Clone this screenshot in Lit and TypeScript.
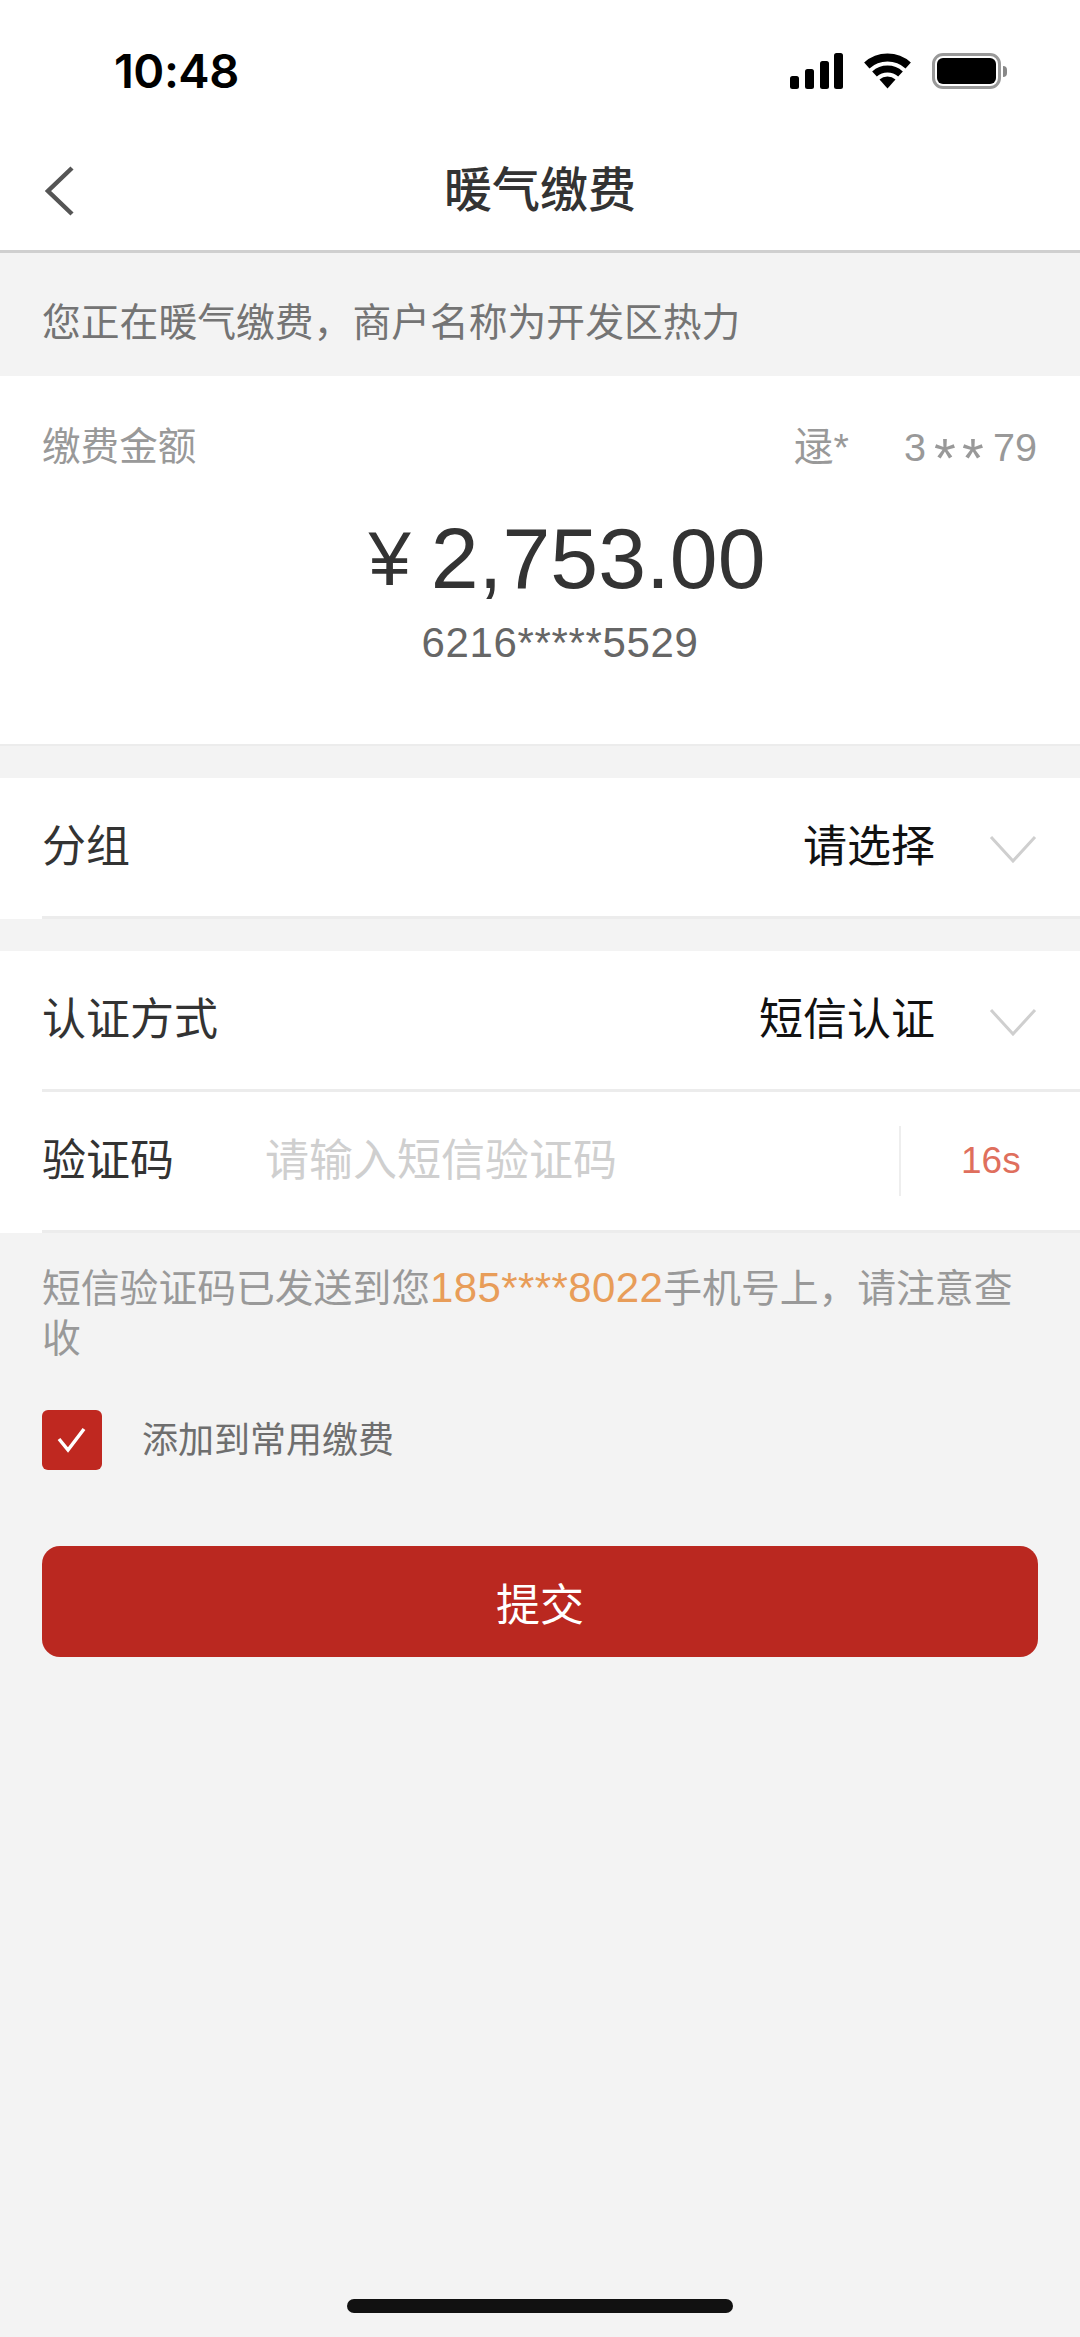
import { LitElement, css, html } from 'lit'
import { customElement } from 'lit/decorators.js'

const chevron = html`<svg class="chevron" width="48" height="28" viewBox="0 0 48 28"><polyline points="2,2 24,26 46,2" fill="none" stroke="#cfcfcf" stroke-width="3"></polyline></svg>`

@customElement('app-root')
export class AppRoot extends LitElement {
  static styles = css`
    :host {
      display: flex;
      flex-direction: column;
      width: 1080px;
      min-height: 2337px;
      background: #f3f3f3;
      font-family: "Liberation Sans", "Noto Sans CJK SC", sans-serif;
      color: #333;
    }
    .top { background: #fff; }
    .status {
      display: flex;
      justify-content: space-between;
      height: 130px;
      box-sizing: border-box;
      padding: 53px 73px 0 114px;
    }
    .time {
      font-family: Inter, sans-serif;
      font-size: 47px;
      font-weight: 600;
      line-height: 36px;
      color: #000;
      letter-spacing: -0.5px;
    }
    .icons { display: flex; align-items: flex-start; gap: 21px; }
    .battery { display: flex; align-items: center; gap: 2px; }
    .battery-body {
      width: 69px;
      height: 36px;
      box-sizing: border-box;
      border: 3px solid #999;
      border-radius: 11px;
      padding: 2px;
    }
    .battery-fill { height: 100%; background: #000; border-radius: 6px; }
    .battery-nub { width: 4px; height: 11px; background: #888; border-radius: 0 4px 4px 0; }

    .nav {
      display: grid;
      grid-template-columns: 1fr auto 1fr;
      align-items: center;
      height: 120px;
      padding-left: 45px;
      padding-right: 45px;
      border-bottom: 3px solid #cfcfcf;
    }
    .back { display: block; margin-top: 2px; }
    .title { font-size: 48px; font-weight: 500; line-height: 60px; color: #333; margin-top: 2px; }

    .notice {
      height: 123px;
      box-sizing: border-box;
      padding: 45px 42px 0;
      font-size: 38.8px;
      line-height: 50px;
      color: #747474;
    }

    .card {
      height: 370px;
      box-sizing: border-box;
      background: #fff;
      border-bottom: 2px solid #ececec;
      padding-top: 46px;
    }
    .card-head {
      display: flex;
      justify-content: space-between;
      padding: 0 42px;
      font-size: 38.6px;
      line-height: 50px;
      color: #999;
    }
    .payer { display: flex; align-items: center; padding-right: 1px; font-size: 39.6px; }
    .payer-name { margin-right: 55px; }
    .star {
      display: inline-block;
      width: 28px;
      height: 28px;
      font-size: 56px;
      line-height: 50px;
      text-align: center;
    }
    .star-first { margin-left: 5px; }
    .payer-end { margin-left: 6px; }
    .amount {
      display: flex;
      justify-content: center;
      align-items: center;
      gap: 20px;
      margin-top: 36px;
      padding-left: 54px;
      height: 100px;
      font-size: 86px;
      color: #333;
    }
    .yen { font-size: 76px; }
    .card-no {
      margin-top: 10px;
      padding-left: 40px;
      text-align: center;
      font-size: 42px;
      line-height: 50px;
      letter-spacing: 0.65px;
      color: #666;
    }

    .group { margin-top: 32px; }
    .row { background: #fff; padding-left: 42px; }
    .row-inner {
      display: flex;
      align-items: center;
      height: 138px;
      border-bottom: 3px solid #ececec;
      font-size: 44px;
      line-height: 60px;
      color: #333;
    }
    .row-label { flex: 1; }
    .row-value { color: #111; margin-right: 54px; }
    .chevron { margin-right: 43px; margin-top: 4px; }
    .code-label { width: 223px; }
    .placeholder { flex: 1; color: #cfcfcf; }
    .divider { width: 2px; height: 70px; background: #eee; }
    .timer { width: 179px; box-sizing: border-box; padding-left: 60px; font-size: 37px; color: #df6f5d; }

    .hint {
      padding: 31px 42px 0;
      font-size: 38.8px;
      line-height: 50px;
      color: #999;
    }
    .phone { color: #e89d59; font-size: 42px; line-height: 0; letter-spacing: 0.4px; }

    .agree {
      display: flex;
      align-items: center;
      gap: 40px;
      margin: 46px 42px 0;
      font-size: 36px;
      color: #6e6e6e;
    }
    .agree-text { margin-bottom: 6px; }
    .checkbox {
      display: flex;
      align-items: center;
      justify-content: center;
      width: 60px;
      height: 60px;
      border-radius: 6px;
      background: #bf2820;
    }
    .submit {
      display: flex;
      align-items: center;
      justify-content: center;
      height: 111px;
      margin: 76px 42px 0;
      border-radius: 18px;
      background: #ba2820;
      color: #fff;
      font-size: 44px;
    }
    .home {
      width: 386px;
      height: 14px;
      border-radius: 7px;
      background: #111;
      margin: auto auto 24px;
    }
  `

  render() {
    return html`
      <div class="top">
        <div class="status">
          <span class="time">10:48</span>
          <div class="icons">
            <svg width="53" height="36" viewBox="0 0 53 36">
              <rect x="0" y="23" width="9" height="13" rx="2.5"></rect>
              <rect x="15" y="16" width="9" height="20" rx="2.5"></rect>
              <rect x="30" y="8" width="9" height="28" rx="2.5"></rect>
              <rect x="44" y="0" width="9" height="36" rx="2.5"></rect>
            </svg>
            <svg width="47" height="36" viewBox="0 0 47 35">
              <path d="M2.8 12 A31 31 0 0 1 44.2 12" fill="none" stroke="#000" stroke-width="8"></path>
              <path d="M10.5 20.5 A19.5 19.5 0 0 1 36.5 20.5" fill="none" stroke="#000" stroke-width="7"></path>
              <path d="M23.5 35 L15.5 26.1 A12 12 0 0 1 31.5 26.1 Z"></path>
            </svg>
            <div class="battery">
              <div class="battery-body"><div class="battery-fill"></div></div>
              <div class="battery-nub"></div>
            </div>
          </div>
        </div>
        <div class="nav">
          <svg class="back" width="30" height="50" viewBox="0 0 30 50"><polyline points="27,2 3,25 27,48" fill="none" stroke="#555" stroke-width="4.5"></polyline></svg>
          <span class="title">暖气缴费</span>
          <span></span>
        </div>
      </div>

      <div class="notice">您正在暖气缴费，商户名称为开发区热力</div>

      <div class="card">
        <div class="card-head">
          <span>缴费金额</span>
          <span class="payer">
            <span class="payer-name">逯*</span>
            <span>3</span><span class="star star-first">*</span><span class="star">*</span><span class="payer-end">79</span>
          </span>
        </div>
        <div class="amount"><span class="yen">¥</span><span>2,753.00</span></div>
        <div class="card-no">6216*****5529</div>
      </div>

      <div class="group">
        <div class="row">
          <div class="row-inner">
            <span class="row-label">分组</span>
            <span class="row-value">请选择</span>
            ${chevron}
          </div>
        </div>
      </div>

      <div class="group">
        <div class="row">
          <div class="row-inner">
            <span class="row-label">认证方式</span>
            <span class="row-value">短信认证</span>
            ${chevron}
          </div>
        </div>
        <div class="row">
          <div class="row-inner">
            <span class="code-label">验证码</span>
            <span class="placeholder">请输入短信验证码</span>
            <span class="divider"></span>
            <span class="timer">16s</span>
          </div>
        </div>
      </div>

      <div class="hint">短信验证码已发送到您<span class="phone">185****8022</span>手机号上，请注意查<br />收</div>

      <div class="agree">
        <span class="checkbox">
          <svg width="34" height="26" viewBox="0 0 34 26"><polyline points="4,12 13,23 29,2" fill="none" stroke="#fff" stroke-width="3.5"></polyline></svg>
        </span>
        <span class="agree-text">添加到常用缴费</span>
      </div>

      <div class="submit">提交</div>

      <div class="home"></div>
    `
  }
}
